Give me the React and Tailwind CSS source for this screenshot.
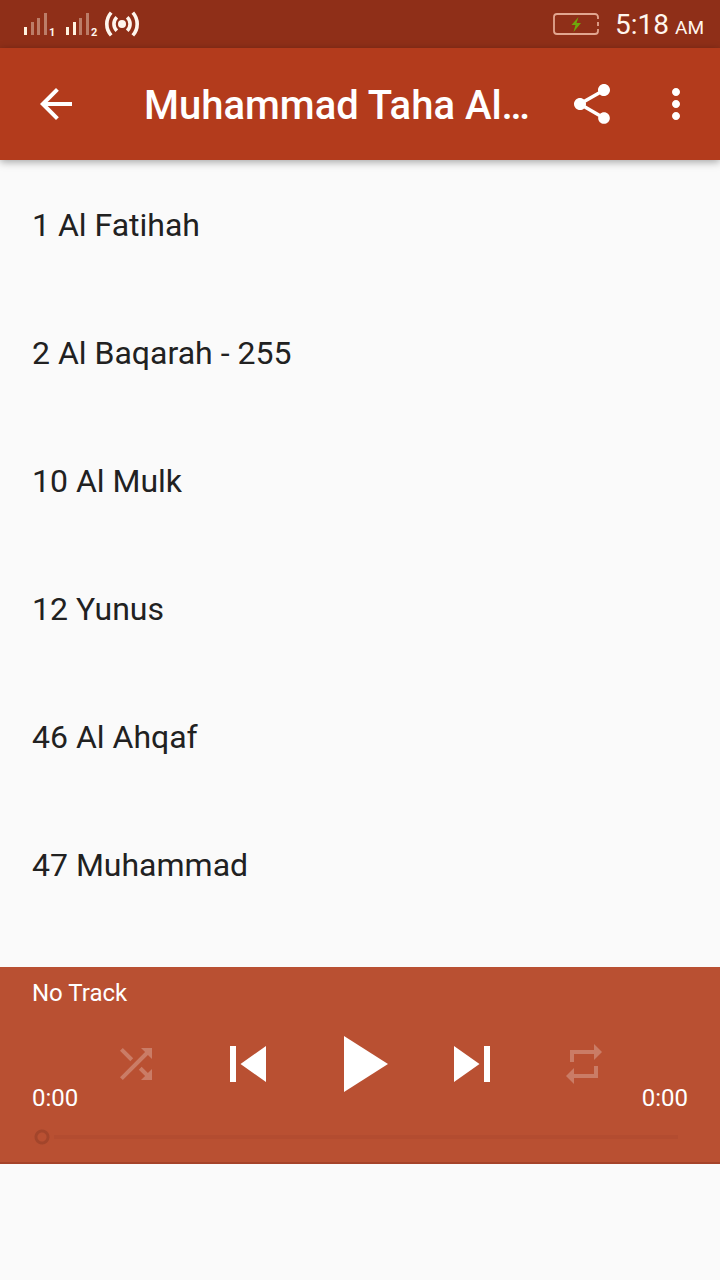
const TRACKS = [
  "1 Al Fatihah",
  "2 Al Baqarah - 255",
  "10 Al Mulk",
  "12 Yunus",
  "46 Al Ahqaf",
  "47 Muhammad",
];

function Icon({ d, className }) {
  return (
    <svg viewBox="0 0 24 24" fill="currentColor" aria-hidden="true" className={className}>
      <path d={d} />
    </svg>
  );
}

function Signal({ level, sim }) {
  const bars = [
    [0, 14, 8],
    [7, 9, 13],
    [13, 5, 17],
    [20, 0, 22],
  ];
  return (
    <div className="flex items-end">
      <svg viewBox="0 0 23 22" className="h-[22px] w-[23px]" fill="#fff3e0" aria-hidden="true">
        {bars.map(([x, y, h], i) => (
          <rect key={x} x={x} y={y} width="3" height={h} opacity={i < level ? 1 : 0.4} />
        ))}
      </svg>
      <span className="-mb-1 w-2 pl-0.5 text-[11px] leading-3 font-bold">{sim}</span>
    </div>
  );
}

function StatusBar() {
  return (
    <div className="flex h-12 items-center justify-between bg-[#8f2f18] pr-4 pl-6 text-[#fff6ee]">
      <div className="flex items-center gap-2">
        <div className="flex items-center gap-[11px]">
          <Signal level={1} sim="1" />
          <Signal level={2} sim="2" />
        </div>
        <svg viewBox="0 0 34 26" className="h-[26px] w-[34px]" fill="none" stroke="currentColor" strokeWidth="3.6" aria-hidden="true">
          <circle cx="17" cy="13" r="4" fill="currentColor" stroke="none" />
          <path d="M11.800 6.200a9.500 9.500 0 0 0 0 13.600M22.200 6.200a9.500 9.500 0 0 1 0 13.600" />
          <path d="M6.200 1.600a17 17 0 0 0 0 22.800M27.800 1.600a17 17 0 0 1 0 22.800" />
        </svg>
      </div>
      <div className="flex items-center gap-4">
        <svg viewBox="0 0 46 22" className="h-[22px] w-[46px]" fill="none" stroke="#e2a690" strokeWidth="1.8" aria-hidden="true">
          <path d="M45 6V4a3 3 0 0 0-3-3H4a3 3 0 0 0-3 3v14a3 3 0 0 0 3 3h38a3 3 0 0 0 3-3v-2M45 9v4" />
          <path d="M25.500 4 18.500 12h4l-2 7 7.500-9h-4.500z" fill="#6fa80c" stroke="none" />
        </svg>
        <div className="flex items-baseline gap-1.5 pt-1">
          <span className="text-[28px] leading-9">5:18</span>
          <span className="text-[19px] leading-9">AM</span>
        </div>
      </div>
    </div>
  );
}

function AppBar() {
  return (
    <header className="relative flex h-28 items-center bg-[#b33b1c] pr-5 pl-8 text-white shadow-[0_2px_8px_rgba(0,0,0,0.35)]">
      <button type="button" aria-label="Back">
        <Icon className="size-12" d="M20 11H7.830l5.590-5.590L12 4l-8 8 8 8 1.410-1.410L7.830 13H20v-2z" />
      </button>
      <h1 className="ml-16 min-w-0 flex-1 truncate pt-1 text-[40px] leading-[48px] font-medium">Muhammad Taha Al…</h1>
      <button type="button" aria-label="Share">
        <Icon
          className="size-12"
          d="M18 16.080c-.76 0-1.440.3-1.960.77L8.910 12.700c.05-.23.090-.46.090-.7s-.040-.47-.090-.7l7.050-4.110c.54.5 1.250.81 2.040.81 1.660 0 3-1.340 3-3s-1.340-3-3-3-3 1.340-3 3c0 .24.040.47.090.7L8.040 9.810C7.500 9.310 6.790 9 6 9c-1.660 0-3 1.340-3 3s1.340 3 3 3c.79 0 1.500-.31 2.040-.81l7.120 4.160c-.05.21-.08.43-.08.65 0 1.610 1.310 2.920 2.920 2.920s2.920-1.310 2.920-2.920-1.310-2.920-2.920-2.920z"
        />
      </button>
      <button type="button" aria-label="More options" className="ml-9">
        <Icon
          className="size-12"
          d="M12 8c1.100 0 2-.9 2-2s-.9-2-2-2-2 .9-2 2 .9 2 2 2zm0 2c-1.100 0-2 .9-2 2s.9 2 2 2 2-.9 2-2-.9-2-2-2zm0 6c-1.100 0-2 .9-2 2s.9 2 2 2 2-.9 2-2-.9-2-2-2z"
        />
      </button>
    </header>
  );
}

const CONTROLS = [
  { label: "Shuffle", size: "size-12 opacity-25", d: "M10.590 9.170L5.410 4 4 5.410l5.170 5.170 1.420-1.410zM14.500 4l2.040 2.040L4 18.590 5.410 20 17.960 7.460 20 9.500V4h-5.500zm.33 9.410l-1.410 1.410 3.130 3.130L14.500 20H20v-5.500l-2.040 2.040-3.130-3.130z" },
  { label: "Previous", size: "size-18", d: "M6 6h2v12H6zm3.500 6l8.500 6V6z" },
  { label: "Play", size: "size-24", d: "M8 5v14l11-7z" },
  { label: "Next", size: "size-18", d: "M6 18l8.500-6L6 6v12zM16 6v12h2V6h-2z" },
  { label: "Repeat", size: "size-12 opacity-25", d: "M7 7h10v3l4-4-4-4v3H5v6h2V7zm10 10H7v-3l-4 4 4 4v-3h12v-6h-2v4z" },
];

function Player() {
  return (
    <section aria-label="Player" className="border-b-2 border-[#a5432a] bg-[#b95032] px-8 pt-3 text-white">
      <p className="text-2xl leading-7">No Track</p>
      <div className="mt-[9px] flex items-end text-2xl leading-7">
        <span className="w-12">0:00</span>
        <div className="grid flex-1 grid-cols-5 items-center justify-items-center">
          {CONTROLS.map((c) => (
            <button key={c.label} type="button" aria-label={c.label}>
              <Icon className={c.size} d={c.d} />
            </button>
          ))}
        </div>
        <span className="w-12 text-right">0:00</span>
      </div>
      <input
        type="range"
        aria-label="Position"
        min="0"
        max="100"
        defaultValue="0"
        className="block h-[50px] w-full appearance-none bg-[linear-gradient(#b34c30,#b34c30)] bg-[length:calc(100%-32px)_4px] bg-[position:22px_center] bg-no-repeat [&::-webkit-slider-thumb]:size-5 [&::-webkit-slider-thumb]:appearance-none [&::-webkit-slider-thumb]:bg-[radial-gradient(circle,#b95032_4px,#a3452b_5px,#a3452b_7px,transparent_8px)]"
      />
    </section>
  );
}

export default function App() {
  return (
    <div className="flex min-h-screen flex-col bg-[#fafafa] font-['Roboto',sans-serif]">
      <StatusBar />
      <AppBar />
      <main className="flex-1">
        <ul>
          {TRACKS.map((t) => (
            <li key={t}>
              <button type="button" className="flex h-32 w-full items-center px-8 pt-0.5 text-left text-[32px] leading-10 text-[#212121]">
                {t}
              </button>
            </li>
          ))}
        </ul>
      </main>
      <div className="pb-[116px]">
        <Player />
      </div>
    </div>
  );
}
